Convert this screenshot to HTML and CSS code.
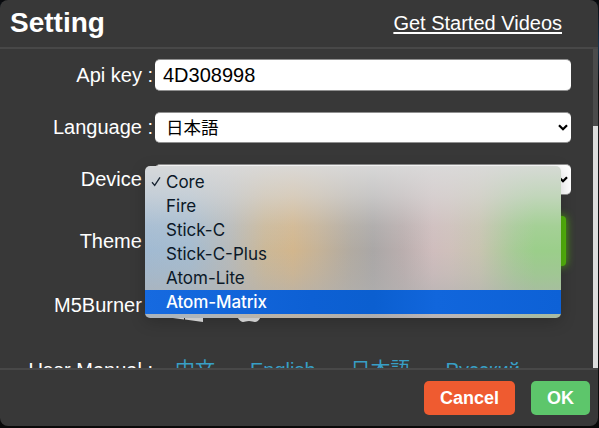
FILE: index.html
```
<!DOCTYPE html>
<html lang="en">
<head>
<meta charset="utf-8">
<title>Setting</title>
<link rel="stylesheet" href="styles.css">
</head>
<body>
<div class="dialog">
  <header class="header">
    <h1 class="title">Setting</h1>
    <a class="videos">Get Started Videos</a>
  </header>
  <main class="body">
    <div class="form">
      <div class="row">
        <label class="label">Api key :</label>
        <div class="field key"><span>4D308998</span></div>
      </div>
      <div class="row">
        <label class="label">Language :</label>
        <div class="field select"><span class="value">日本語</span>
          <svg class="chevron" viewBox="0 0 10 7"><path d="M1 1.3 5 5.2 9 1.3"/></svg>
        </div>
      </div>
      <div class="row">
        <label class="label">Device :</label>
        <div class="field select"><span></span>
          <svg class="chevron" viewBox="0 0 10 7"><path d="M1 1.3 5 5.2 9 1.3"/></svg>
          <div class="menu">
            <div class="option"><svg class="check" viewBox="0 0 10 11"><path d="M1 6.3 3.7 9.4 9 1.3"/></svg><span>Core</span></div>
            <div class="option"><span>Fire</span></div>
            <div class="option"><span>Stick-C</span></div>
            <div class="option"><span>Stick-C-Plus</span></div>
            <div class="option"><span>Atom-Lite</span></div>
            <div class="option active"><span>Atom-Matrix</span></div>
          </div>
        </div>
      </div>
      <div class="row theme">
        <label class="label">Theme :</label>
        <div class="themes"><i class="swatch"></i></div>
      </div>
      <div class="row burner">
        <label class="label">M5Burner :</label>
        <div class="systems">
          <svg class="system" viewBox="0 0 32 32"><path d="M0 4.5 13 2.7V15H0zM14 2.4 32 0v15H14zM0 17h13v12.5L0 27.7zM14 17h18v15l-18-2.4z"/></svg>
          <svg class="system apple" viewBox="0 0 26 32"><path d="M18 0c0 4-3 7-6 7 0-4 3-7 6-7zM13 9c2 0 4-2 7-1 2 0 4 1 5 3-6 4-4 11 1 13-2 5-4 8-7 8-2 0-3-1-6-1s-4 1-6 1C2 32-5 18 3 10c4-4 7-1 10-1z"/></svg>
        </div>
      </div>
      <div class="row manual">
        <label class="label">User Manual :</label>
        <div class="links"><a>中文</a><a>English</a><a>日本語</a><a>Русский</a></div>
      </div>
    </div>
    <div class="scrollbar"><div class="thumb"></div></div>
  </main>
  <footer class="footer">
    <button class="button cancel">Cancel</button>
    <button class="button ok">OK</button>
  </footer>
</div>
</body>
</html>
```
FILE: styles.css
```
* { box-sizing: border-box; }
body {
  margin: 0;
  height: 428px;
  overflow: hidden;
  background: linear-gradient(#08090c, #17344e 45px, #07090c 85px, #17191c 130px, #090909);
  color: #fff;
  font-family: "Liberation Sans", "Noto Sans CJK JP", sans-serif;
  font-size: 20px;
}
.dialog {
  display: flex;
  flex-direction: column;
  width: 598px;
  height: 426px;
  border-radius: 8px;
  overflow: hidden;
  background: #383838;
}
.header {
  display: flex;
  align-items: center;
  justify-content: space-between;
  flex: none;
  height: 49px;
  padding: 0 36px 1px 10px;
  border-bottom: 2px solid #484848;
}
.title { margin: 0; font-size: 28px; line-height: 32px; }
.videos { text-decoration: underline; text-underline-offset: 2px; }
.body { display: flex; height: 319px; overflow: hidden; }
.form { flex: 1; min-width: 0; padding-top: 10px; }
.row { display: flex; align-items: center; height: 32px; margin-bottom: 20px; }
.label { flex: none; width: 153px; margin-right: 2px; text-align: right; white-space: nowrap; }
.field {
  position: relative;
  display: flex;
  align-items: center;
  width: 416px;
  height: 32px;
  border: 1px solid #909090;
  border-width: 1px 0;
  border-radius: 5px;
  background: #fff;
  color: #000;
}
.key { padding-left: 8px; }
.select { justify-content: space-between; height: 31px; padding: 0 3px 0 11px; font-size: 17.5px; }
.value { padding-bottom: 2px; }
.chevron { width: 10px; height: 7px; fill: none; stroke: #000; stroke-width: 2.3; }
.menu {
  position: absolute;
  z-index: 1;
  top: 1px;
  left: -10px;
  width: 416px;
  height: 152px;
  padding-top: 4px;
  border-radius: 5px;
  overflow: hidden;
  background:
    linear-gradient(rgba(219,219,219,.92), rgba(219,219,219,.6) 30px, rgba(219,219,219,.15) 60px, transparent 85px, rgba(176,176,176,.25) 108px, rgba(176,176,176,.65) 132px),
    linear-gradient(90deg, #a1bad2 0, #a5bcd0 45px, #b7baba 85px, #cbb898 120px, #d2b68d 148px, #c6b397 172px, #b2aba1 205px, #aaa7a6 228px, #baaeae 258px, #cfbdbd 288px, #cfc0bb 305px, #c7c4b0 335px, #a6cb96 370px, #9bce8a 390px, #9bce8a);
  color: #0b1827;
  font-family: Inter, sans-serif;
  font-size: 17px;
  box-shadow: 0 4px 16px rgba(0,0,0,.2);
}
.option { display: flex; align-items: center; height: 24px; padding-left: 21px; position: relative; }
.option.active { background: linear-gradient(90deg, #166ae0, #0d60d4 40%, #0b5fd0 55%, #1166dc 70%, #0d61d6); color: #fff; font-weight: 500; letter-spacing: -.1px; }
.check { position: absolute; left: 6px; top: 6px; width: 10px; height: 11px; fill: none; stroke: #182432; stroke-width: 1.3; }
.row.theme { height: 52px; }
.themes { display: flex; justify-content: flex-end; width: 411px; }
.swatch { width: 40px; height: 50px; border-radius: 4px; background: #52b20b; box-shadow: 0 0 8px #52b20b; }
.row.burner { height: 36px; margin-bottom: 31px; }
.systems { display: flex; gap: 33px; padding: 2px 0 0 16px; }
.system { width: 32px; height: 32px; fill: #e8e8e8; }
.apple { width: 26px; }
.row.manual { margin-bottom: 0; height: 36px; align-items: baseline; }
.links { display: flex; align-items: baseline; gap: 35px; padding-left: 20px; color: #389fc5; }
.scrollbar { flex: none; width: 5px; padding-top: 77px; background: #4b4b4b; }
.thumb { height: 242px; background: #dcdcdc; }
.footer {
  display: flex;
  flex: none;
  justify-content: flex-end;
  gap: 16px;
  height: 58px;
  padding: 11px 8px 0 0;
  border-top: 2px solid #484848;
}
.button {
  height: 34px;
  padding: 0;
  border: 0;
  border-radius: 5px;
  color: #fff;
  font: bold 18px "Liberation Sans", sans-serif;
}
.cancel { width: 91px; background: #ef5b30; }
.ok { width: 59px; background: #5dc66b; }
```
